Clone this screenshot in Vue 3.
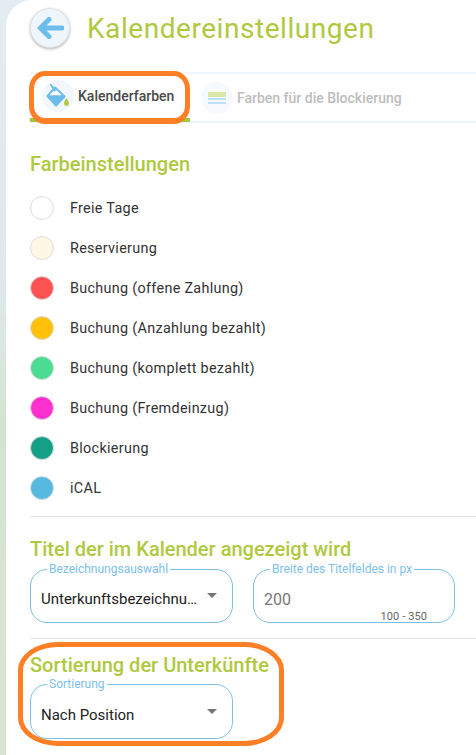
<template>
  <div class="page">
    <div class="panel">
      <header class="head">
        <button class="back" type="button" aria-label="Zurück">
          <svg width="27" height="22" viewBox="0 0 27 22">
            <path d="M25 11 H4 M12 2.5 L3.5 11 L12 19.5" fill="none" stroke="#6cbcec" stroke-width="5" stroke-linecap="round" stroke-linejoin="miter" />
          </svg>
        </button>
        <h1>Kalendereinstellungen</h1>
      </header>

      <nav class="tabs">
        <div class="tab active">
          <span class="tab-icon">
            <svg width="24" height="24" viewBox="0 0 24 24">
              <path d="M1.5 12 L9 3.5 L18.5 12.5 L10 21.5 Z" fill="#fff" stroke="#6cbcec" stroke-width="2" stroke-linejoin="round" />
              <path d="M1.5 12 H18 L10 21.5 Z" fill="#6cbcec" stroke="#6cbcec" stroke-width="1.5" stroke-linejoin="round" />
              <path d="M5 1 L9 6.5" stroke="#6cbcec" stroke-width="2" stroke-linecap="round" />
              <path d="M20.5 14 C22 16.5 23 17.6 23 19.4 A2.5 2.5 0 0 1 18 19.4 C18 17.6 19 16.5 20.5 14 Z" fill="#afc93f" />
            </svg>
          </span>
          <span>Kalenderfarben</span>
        </div>
        <div class="tab">
          <span class="tab-icon second">
            <svg width="18" height="12" viewBox="0 0 18 12">
              <rect x="0" y="0" width="18" height="5" fill="#dbe8ad" />
              <rect x="0" y="6" width="18" height="2" fill="#bfe0f6" />
              <rect x="0" y="10" width="18" height="2" fill="#bfe0f6" />
            </svg>
          </span>
          <span>Farben für die Blockierung</span>
        </div>
      </nav>

      <section class="colors">
        <h2>Farbeinstellungen</h2>
        <ul>
          <li v-for="item in colors" :key="item.label">
            <span class="dot" :style="{ background: item.color }"></span>
            <span>{{ item.label }}</span>
          </li>
        </ul>
      </section>

      <section class="block title-block">
        <h2>Titel der im Kalender angezeigt wird</h2>
        <div class="fields">
          <fieldset class="field">
            <legend>Bezeichnungsauswahl</legend>
            <div class="select">
              <span class="value">Unterkunftsbezeichnu…</span>
              <span class="caret"></span>
            </div>
          </fieldset>
          <fieldset class="field">
            <legend>Breite des Titelfeldes in px</legend>
            <div class="select muted">200</div>
            <span class="hint">100 - 350</span>
          </fieldset>
        </div>
      </section>

      <section class="block sort-block">
        <h2>Sortierung der Unterkünfte</h2>
        <fieldset class="field">
          <legend>Sortierung</legend>
          <div class="select">
            <span class="value">Nach Position</span>
            <span class="caret"></span>
          </div>
        </fieldset>
      </section>
    </div>

    <div class="mark mark-tab"></div>
    <div class="mark mark-sort"></div>
  </div>
</template>

<script setup>
const colors = [
  { label: "Freie Tage", color: "#ffffff" },
  { label: "Reservierung", color: "#fdf7e3" },
  { label: "Buchung (offene Zahlung)", color: "#ff5252" },
  { label: "Buchung (Anzahlung bezahlt)", color: "#ffc107" },
  { label: "Buchung (komplett bezahlt)", color: "#4cdb92" },
  { label: "Buchung (Fremdeinzug)", color: "#ff2fd0" },
  { label: "Blockierung", color: "#14a085" },
  { label: "iCAL", color: "#57b9e0" },
];
</script>

<style>
html,
body {
  margin: 0;
  background: #fff;
}
</style>

<style scoped>
.page {
  position: relative;
  width: 476px;
  height: 755px;
  overflow: hidden;
  font-family: Roboto, "Liberation Sans", sans-serif;
  background: linear-gradient(180deg, #e3ecf1 0%, #dfe9ec 38%, #d5e3d2 55%, #d8e4d4 100%);
}

.panel {
  margin-left: 6px;
  width: 470px;
  height: 755px;
  padding-left: 24px;
  box-sizing: border-box;
  background: #fff;
  border-top-left-radius: 26px;
  overflow: hidden;
}

.head {
  display: flex;
  align-items: center;
  padding-top: 8px;
  height: 40px;
}

.back {
  width: 40px;
  height: 40px;
  padding: 0;
  border: 1px solid #e2e2e2;
  box-sizing: border-box;
  border-radius: 50%;
  background: #eef6fc;
  box-shadow: 0 1px 3px rgba(0, 0, 0, 0.3);
  display: flex;
  align-items: center;
  justify-content: center;
}

h1 {
  margin: 0 0 0 17px;
  font-size: 28px;
  font-weight: 400;
  letter-spacing: 0.55px;
  color: #afc93f;
  white-space: nowrap;
}

.tabs {
  display: flex;
  height: 47px;
  margin-top: 24px;
  border-top: 2px solid #f1f6fb;
  border-bottom: 2px solid #f1f6fb;
  font-size: 14px;
  font-weight: 500;
  color: #bdbdbd;
  white-space: nowrap;
}

.tab {
  display: flex;
  align-items: center;
  gap: 4px;
  padding: 0 16px 0 11px;
  height: 47px;
  box-sizing: border-box;
}

.tab.active {
  width: 160px;
  padding-left: 12px;
  padding-right: 0;
  color: #4a4a4a;
  border-bottom: 4px solid #a4c639;
  height: 48px;
  margin-bottom: -1px;
}

.tab-icon {
  flex: none;
  width: 32px;
  height: 32px;
  border-radius: 50%;
  background: #f1f7fc;
  display: flex;
  align-items: center;
  justify-content: center;
}

.tab-icon.second {
  background: #f6fafe;
}

h2 {
  margin: 0;
  font-size: 20px;
  line-height: 24px;
  font-weight: 500;
  color: #afc93f;
  white-space: nowrap;
}

.colors {
  padding-top: 29px;
  height: 394px;
  box-sizing: border-box;
  width: 446px;
  border-bottom: 1px solid #e2e2e2;
}

.colors ul {
  list-style: none;
  margin: 0;
  padding: 0;
  margin-top: 12px;
}

.colors li {
  display: flex;
  align-items: center;
  gap: 16px;
  height: 40px;
  font-size: 14.4px;
  letter-spacing: 0.3px;
  color: #333;
}

.dot {
  width: 24px;
  height: 24px;
  box-sizing: border-box;
  border: 1px solid #dcdcdc;
  border-radius: 50%;
}

.block {
  width: 446px;
  box-sizing: border-box;
}

.title-block {
  height: 122px;
  padding-top: 20px;
  border-bottom: 1px solid #e2e2e2;
}

.sort-block {
  padding-top: 14px;
}

.sort-block .field {
  margin-top: 1px;
  height: 61px;
}

.sort-block .select {
  height: 48px;
}

.fields {
  display: flex;
  gap: 20px;
  margin-top: 2px;
}

.field {
  position: relative;
  width: 203px;
  height: 60px;
  margin: 0;
  padding: 0 10px;
  box-sizing: border-box;
  border: 1px solid #7cc0ea;
  border-radius: 17px;
  min-width: 0;
}

.fields .field:last-child {
  width: 202px;
}

legend {
  padding: 0 2px;
  margin-left: 6px;
  font-size: 12px;
  line-height: 13px;
  color: #7cc0ea;
  white-space: nowrap;
}

.select {
  display: flex;
  align-items: center;
  justify-content: space-between;
  height: 46px;
  font-size: 15px;
  color: #222;
}

.select.muted {
  font-size: 16px;
  color: #777;
}

.caret {
  width: 0;
  height: 0;
  margin-right: 5px;
  margin-bottom: 8px;
  border-left: 5px solid transparent;
  border-right: 5px solid transparent;
  border-top: 5px solid #757575;
}

.hint {
  position: absolute;
  right: 27px;
  bottom: -1px;
  font-size: 11px;
  line-height: 13px;
  letter-spacing: 0.1px;
  color: #666;
}

.mark {
  position: absolute;
  box-sizing: border-box;
  border: 5px solid #ff7f27;
  pointer-events: none;
}

.mark-tab {
  left: 29px;
  top: 71px;
  width: 161px;
  height: 53px;
  border-bottom-width: 6px;
  border-radius: 16px / 18px;
}

.mark-sort {
  left: 18px;
  top: 642px;
  width: 266px;
  height: 104px;
  border-radius: 40px / 28px;
}
</style>
